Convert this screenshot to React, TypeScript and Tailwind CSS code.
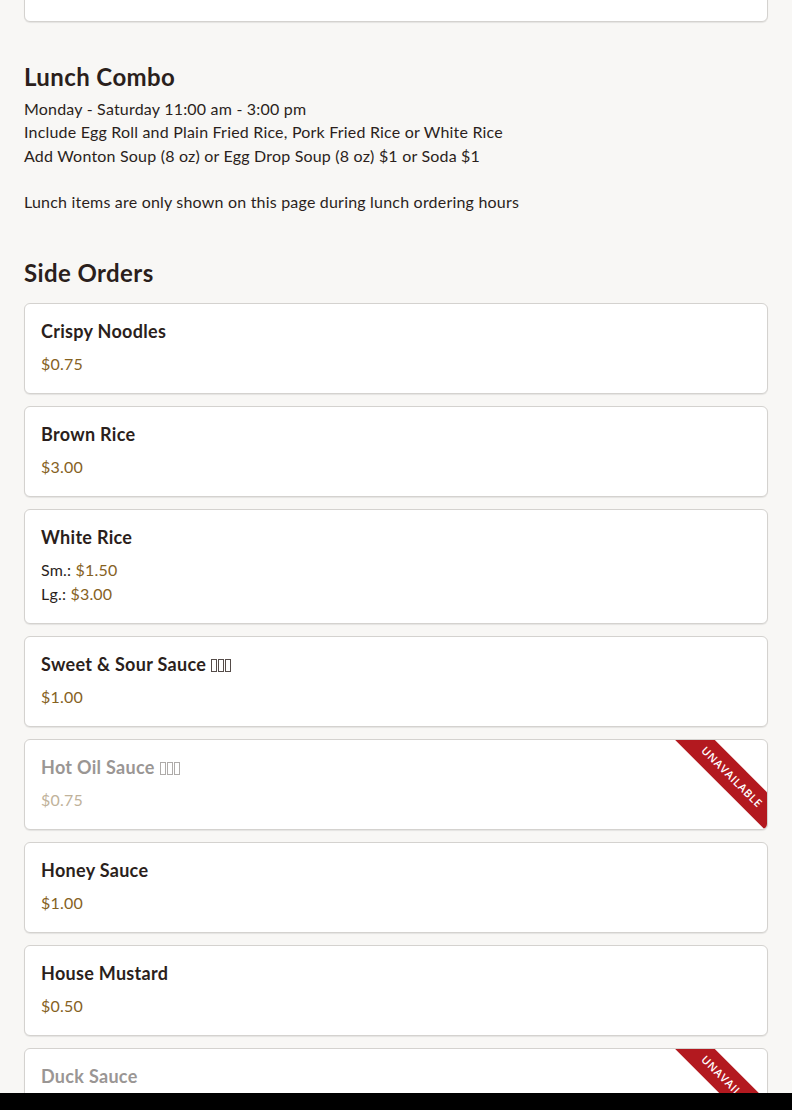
import React from "react";

type Price = { label?: string; value: string };
type Item = { name: string; prices: Price[]; unavailable?: boolean; tofu?: boolean };

const items: Item[] = [
  { name: "Crispy Noodles", prices: [{ value: "$0.75" }] },
  { name: "Brown Rice", prices: [{ value: "$3.00" }] },
  { name: "White Rice", prices: [{ label: "Sm.:", value: "$1.50" }, { label: "Lg.:", value: "$3.00" }] },
  { name: "Sweet & Sour Sauce", tofu: true, prices: [{ value: "$1.00" }] },
  { name: "Hot Oil Sauce", tofu: true, prices: [{ value: "$0.75" }], unavailable: true },
  { name: "Honey Sauce", prices: [{ value: "$1.00" }] },
  { name: "House Mustard", prices: [{ value: "$0.50" }] },
  { name: "Duck Sauce", prices: [{ value: "$1.00" }], unavailable: true },
];

function Tofu() {
  return (
    <span className="ml-[5px] inline-flex gap-[1px] align-[-1px]">
      <span className="inline-block h-[13px] w-[6px] border border-current opacity-80" />
      <span className="inline-block h-[13px] w-[6px] border border-current opacity-80" />
      <span className="inline-block h-[13px] w-[6px] border border-current opacity-80" />
    </span>
  );
}

function Card({ item }: { item: Item }) {
  const un = item.unavailable;
  return (
    <div className="relative overflow-hidden rounded-md border border-[#d4d2cf] bg-white px-4 pt-4 pb-[17px] shadow-[0_1px_1px_rgba(0,0,0,0.08)]">
      <div className={`text-[18px] leading-[22px] font-bold tracking-[0.3px] ${un ? "text-[#9a9694]" : "text-[#2b1f1c]"}`}>
        {item.name}
        {item.tofu && <Tofu />}
      </div>
      <div className="mt-[10px] flex flex-col">
        {item.prices.map((p, i) => (
          <div key={i} className="text-[16px] leading-[24px] tracking-[0.2px]">
            {p.label && <span className={un ? "text-[#a8a4a2]" : "text-[#2b1f1c]"}>{p.label} </span>}
            <span className={un ? "text-[#bfb29a]" : "text-[#86621f]"}>{p.value}</span>
          </div>
        ))}
      </div>
      {un && (
        <div className="absolute right-[-45px] top-[23px] flex h-[28px] w-[160px] rotate-45 items-center justify-center bg-[#b3191f] text-[11px] font-semibold uppercase tracking-[0.6px] text-white" style={{ fontFamily: "'Open Sans', sans-serif" }}>
          Unavailable
        </div>
      )}
    </div>
  );
}

export default function App() {
  return (
    <div className="flex h-[1110px] flex-col overflow-hidden bg-[#f8f7f5]" style={{ fontFamily: "Lato, 'Noto Sans', sans-serif" }}>
      <div className="flex-1 overflow-hidden px-6">
        <div className="mt-[-69px]">
          <Card item={{ name: "Egg Roll", prices: [{ value: "$1.75" }] }} />
        </div>
        <h2 className="mt-[39px] text-[24px] leading-[32px] font-bold tracking-[0.4px] text-[#2b1f1c]">Lunch Combo</h2>
        <div className="mt-1 text-[16px] leading-[23.25px] tracking-[0.2px] text-[#2b1f1c]">
          <div>Monday - Saturday 11:00 am - 3:00 pm</div>
          <div>Include Egg Roll and Plain Fried Rice, Pork Fried Rice or White Rice</div>
          <div>Add Wonton Soup (8 oz) or Egg Drop Soup (8 oz) $1 or Soda $1</div>
          <div className="h-[23.25px]" />
          <div>Lunch items are only shown on this page during lunch ordering hours</div>
        </div>
        <h2 className="mt-[44px] text-[24px] leading-[32px] font-bold tracking-[0.4px] text-[#2b1f1c]">Side Orders</h2>
        <div className="mt-[14px] flex flex-col gap-3">
          {items.map((it, i) => (
            <Card key={i} item={it} />
          ))}
        </div>
      </div>
      <div className="h-[17px] bg-black" />
    </div>
  );
}
